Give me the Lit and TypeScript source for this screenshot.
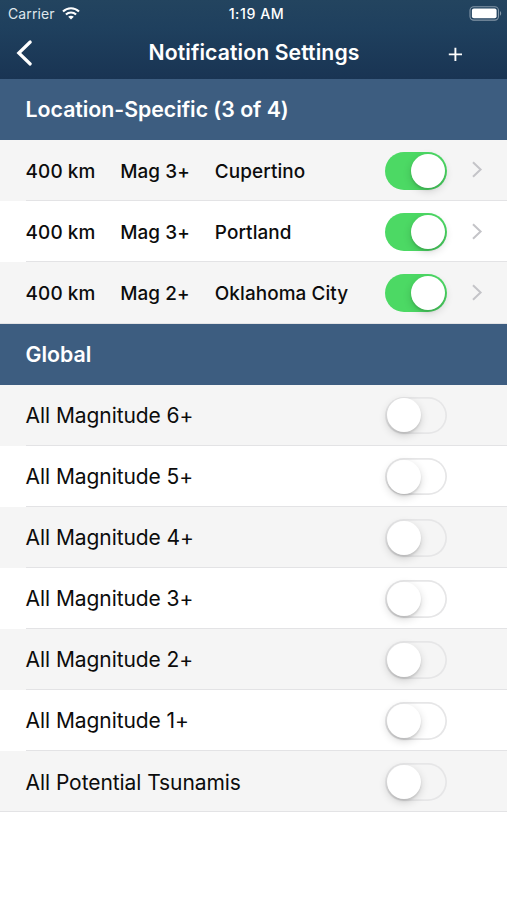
import { LitElement, html, css } from "lit";
import { customElement, property } from "lit/decorators.js";
import { classMap } from "lit/directives/class-map.js";

@customElement("toggle-switch")
class ToggleSwitch extends LitElement {
  @property({ type: Boolean }) on = false;
  static styles = css`
    :host { display: block; flex: none; }
    .track {
      box-sizing: border-box; width: 62.4px; height: 37.8px; border-radius: 19px;
      display: flex; align-items: center; padding: 0 2px 0 1.9px;
      box-shadow: inset 0 0 0 1.7px #e6e6e7;
    }
    .track.on { background: #4cd964; box-shadow: none; justify-content: flex-end; }
    .knob {
      width: 34px; height: 34px; border-radius: 50%; background: #fff;
      box-shadow: 0 3px 8px rgba(0, 0, 0, 0.16), 0 2px 2px rgba(0, 0, 0, 0.1);
    }
  `;
  render() {
    return html`<div class=${classMap({ track: true, on: this.on })}><div class="knob"></div></div>`;
  }
}

const locations = [
  { radius: "400 km", mag: "Mag 3+", place: "Cupertino" },
  { radius: "400 km", mag: "Mag 3+", place: "Portland" },
  { radius: "400 km", mag: "Mag 2+", place: "Oklahoma City" },
];
const globals = [
  "All Magnitude 6+", "All Magnitude 5+", "All Magnitude 4+", "All Magnitude 3+",
  "All Magnitude 2+", "All Magnitude 1+", "All Potential Tsunamis",
];

@customElement("app-root")
class AppRoot extends LitElement {
  static styles = css`
    :host {
      display: block; height: 900px; overflow: hidden; background: #fff; color: #0c0c0c;
      font-family: Inter, "Liberation Sans", sans-serif; white-space: nowrap;
    }
    svg { display: block; flex: none; }
    .top { height: 79.2px; background: linear-gradient(#23445f, #1f405e 35%, #193453); color: #fff; }
    .status {
      height: 27px; display: grid; grid-template-columns: 1fr auto 1fr; align-items: center;
      padding: 0 5px 0 8px; font-size: 14px; line-height: 27px;
    }
    .carrier { display: flex; align-items: center; gap: 7px; color: #dfe6ec; letter-spacing: 0.1px; }
    .time { font-size: 14.2px; font-weight: 500; letter-spacing: 0.55px; padding-left: 3px; }
    .battery { justify-self: end; }
    .nav {
      height: 52px; display: grid; grid-template-columns: 60px 1fr 60px; align-items: center;
      padding: 0 16px;
    }
    .title {
      text-align: center; font-size: 21.2px; font-weight: 600; line-height: 52px; letter-spacing: 0.1px;
      padding: 0 0 1px 1px; height: 52px; box-sizing: border-box; line-height: 50px;
    }
    .section {
      height: 61.1px; line-height: 61.4px; background: #3d5d80; color: #fff; padding-left: 25.6px;
      font-size: 21.3px; font-weight: 600; letter-spacing: -0.03px; box-sizing: border-box;
    }
    .row {
      height: 61.1px; box-sizing: border-box; display: flex; align-items: center;
      padding: 0.6px 23px 0 25.6px; background: linear-gradient(#e3e3e5, #e3e3e5) 26px 100% / 100% 1px no-repeat #fff;
    }
    .row:nth-child(odd) { background-color: #f5f5f5; }
    .row.last { background-position: 0 100%; }
    .loc { font-size: 18.9px; font-weight: 500; letter-spacing: 0.1px; }
    .radius { width: 94.6px; }
    .mag { width: 94.6px; }
    .place { flex: 1; }
    .label { flex: 1; font-size: 21px; letter-spacing: -0.07px; }
    .more { width: 37px; display: flex; justify-content: flex-end; padding-bottom: 1.4px; }
  `;

  render() {
    return html`
      <header class="top">
        <div class="status">
          <div class="carrier">
            <span>Carrier</span>
            <svg width="18" height="13" viewBox="0 0 18 13" fill="none" stroke="#fff" stroke-width="2.1">
              <path d="M1 4.6C5.5.2 12.5.2 17 4.6M3.9 7.6c2.9-2.8 7.3-2.8 10.2 0" />
              <path d="M9 12.6 6.2 9.8c1.6-1.5 4-1.5 5.6 0Z" fill="#fff" stroke="none" />
            </svg>
          </div>
          <span class="time">1:19 AM</span>
          <svg class="battery" width="33" height="15" viewBox="0 0 33 15">
            <rect x="1" y=".7" width="28.5" height="13.4" rx="3.8" fill="none" stroke="#8497a8" stroke-width="1.1" />
            <rect x="2.9" y="2.6" width="24.7" height="9.6" rx="2" fill="#fff" />
            <path d="M31 5.1c1.6.7 1.6 3.9 0 4.6Z" fill="#8497a8" />
          </svg>
        </div>
        <nav class="nav">
          <svg width="17" height="28" viewBox="0 0 17 28" fill="none" stroke="#fff" stroke-width="3.2" stroke-linecap="round">
            <path d="M14.2 3 2.8 14l11.4 11" stroke-linejoin="miter" />
          </svg>
          <div class="title">Notification Settings</div>
          <svg width="60" height="28" viewBox="0 0 60 28" stroke="#fff" stroke-width="1.9">
            <path d="M17.8 15.4h13.2M24.4 8.8v13.2" />
          </svg>
        </nav>
      </header>
      <div class="section">Location-Specific (3 of 4)</div>
      <div>
        ${locations.map((l, i) => html`
          <div class=${classMap({ row: true, loc: true, last: i === locations.length - 1 })}>
            <span class="radius">${l.radius}</span>
            <span class="mag">${l.mag}</span>
            <span class="place">${l.place}</span>
            <toggle-switch on></toggle-switch>
            <div class="more">
              <svg width="13" height="18" viewBox="0 0 13 18" fill="none" stroke="#c4c4c8" stroke-width="2">
                <path d="M2 1.2 9.6 8.5 2 15.8" />
              </svg>
            </div>
          </div>`)}
      </div>
      <div class="section">Global</div>
      <div>
        ${globals.map((g, i) => html`
          <div class=${classMap({ row: true, last: i === globals.length - 1 })}>
            <span class="label">${g}</span>
            <toggle-switch></toggle-switch>
            <div class="more"></div>
          </div>`)}
      </div>
    `;
  }
}
